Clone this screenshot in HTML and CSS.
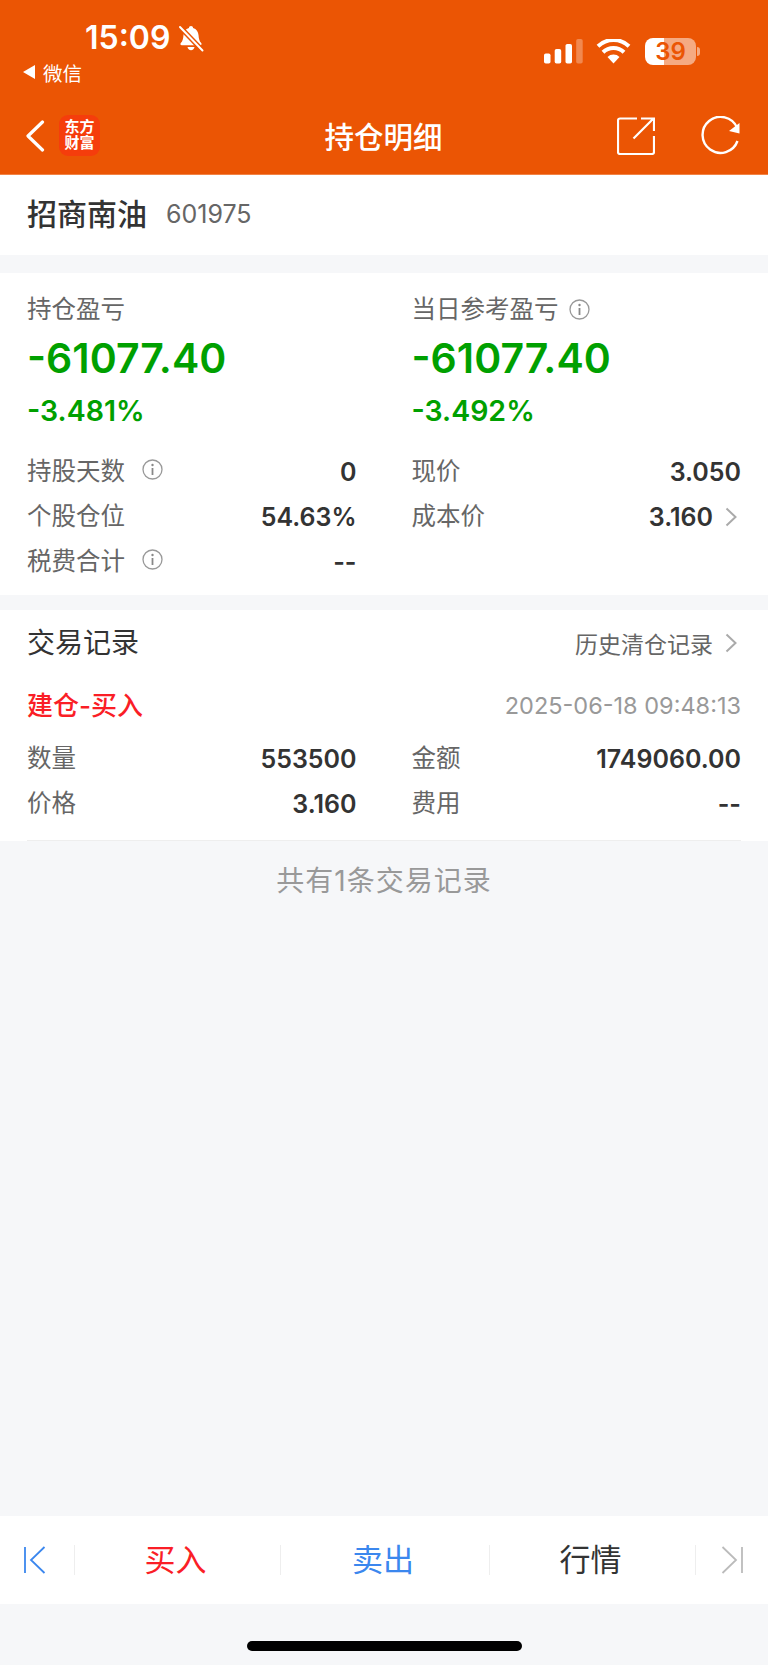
FILE: index.html
```html
<!DOCTYPE html>
<html lang="zh-CN">
<head>
  <meta charset="UTF-8">
  <title>持仓明细</title>
  <link rel="stylesheet" href="styles.css">
</head>
<body>

  <header class="header">
    <div class="status">
      <div class="status-left">
        <div class="clock">
          <span class="time">15:09</span>
          <svg class="bell" width="26" height="27" viewBox="0 0 26 27">
            <path d="M13 1c-1.300 0-2 .9-2.100 2C7.400 4 5.800 6.800 5.500 10c-.3 3.400-.7 6-2.700 8-.8.900-.3 2.200 1 2.200h18.400c1.300 0 1.800-1.300 1-2.200-2-2-2.400-4.600-2.700-8-.3-3.200-1.900-6-5.400-7C15 1.900 14.300 1 13 1z" fill="#fff"/>
            <path d="M9.500 22h7c-.3 2-1.700 3.200-3.500 3.200S9.800 24 9.500 22z" fill="#fff"/>
            <path d="M1.500 1.500l23 24" stroke="#eb5504" stroke-width="5"/>
            <path d="M2 2l22.500 23.500" stroke="#fff" stroke-width="2" stroke-linecap="round"/>
          </svg>
        </div>
        <div class="from">
          <svg width="12" height="14" viewBox="0 0 12 14"><polygon points="0,7 12,0 12,14" fill="#fff"/></svg>
          <span>微信</span>
        </div>
      </div>
      <div class="status-right">
        <svg width="40" height="25" viewBox="0 0 40 25">
          <rect x="0" y="14.500" width="6.500" height="10" rx="1.800" fill="#fff"/>
          <rect x="10.700" y="10" width="6.500" height="14.500" rx="1.800" fill="#fff"/>
          <rect x="21.500" y="5" width="6.500" height="19.500" rx="1.800" fill="#fff"/>
          <rect x="32.200" y="0" width="6.500" height="24.500" rx="1.800" fill="#fff" opacity=".3"/>
        </svg>
        <svg width="35" height="25" viewBox="0 0 35 25">
          <path d="M17.500 24.500L11.500 18a8.600 8.600 0 0 1 12 0z" fill="#fff"/>
          <path d="M7 13.200a15 15 0 0 1 21 0" fill="none" stroke="#fff" stroke-width="4"/>
          <path d="M2 7.200a22.500 22.500 0 0 1 31 0" fill="none" stroke="#fff" stroke-width="4"/>
        </svg>
        <div class="battery">
          <div class="battery-body">39</div>
          <div class="battery-tip"></div>
        </div>
      </div>
    </div>

    <nav class="nav">
      <div class="nav-left">
        <svg width="20" height="32" viewBox="0 0 20 32"><path d="M17.500 2L3 16l14.500 14" fill="none" stroke="#fff" stroke-width="3.200" stroke-linecap="round" stroke-linejoin="round"/></svg>
        <div class="logo">东方<br>财富</div>
      </div>
      <div class="nav-title">持仓明细</div>
      <div class="nav-right">
        <svg width="38" height="38" viewBox="0 0 38 38">
          <path d="M20 1.500H3a2 2 0 0 0-2 2V35a2 2 0 0 0 2 2h32a2 2 0 0 0 2-2V19" fill="none" stroke="#fff" stroke-width="2.200"/>
          <path d="M16.500 21.500L36 2M24 1.500h13V14" fill="none" stroke="#fff" stroke-width="2.200"/>
        </svg>
        <svg width="39" height="39" viewBox="0 0 39 39">
          <path d="M36 11.500A18 18 0 1 0 36.500 25" fill="none" stroke="#fff" stroke-width="2.400"/>
          <polygon points="38.500,7 38.500,17.500 28,15" fill="#fff"/>
        </svg>
      </div>
    </nav>
  </header>

  <main class="main">
    <section class="stock">
      <span class="stock-name">招商南油</span>
      <span class="stock-code">601975</span>
    </section>

    <section class="summary">
      <div class="totals">
        <div>
          <div class="total-label">持仓盈亏</div>
          <div class="total-value">-61077.40</div>
          <div class="total-pct">-3.481%</div>
        </div>
        <div>
          <div class="total-label">当日参考盈亏
            <svg class="info info-near" width="21" height="21" viewBox="0 0 21 21"><circle cx="10.500" cy="10.500" r="9.500" fill="none" stroke="#999" stroke-width="1.300"/><path d="M10.500 9v7" stroke="#888" stroke-width="1.800"/><circle cx="10.500" cy="6" r="1.200" fill="#888"/></svg>
          </div>
          <div class="total-value">-61077.40</div>
          <div class="total-pct">-3.492%</div>
        </div>
      </div>
      <div class="rows">
        <div class="row">
          <span class="row-label">持股天数
            <svg class="info" width="21" height="21" viewBox="0 0 21 21"><circle cx="10.500" cy="10.500" r="9.500" fill="none" stroke="#999" stroke-width="1.300"/><path d="M10.500 9v7" stroke="#888" stroke-width="1.800"/><circle cx="10.500" cy="6" r="1.200" fill="#888"/></svg>
          </span>
          <span class="row-value">0</span>
        </div>
        <div class="row">
          <span class="row-label">现价</span>
          <span class="row-value">3.050</span>
        </div>
        <div class="row">
          <span class="row-label">个股仓位</span>
          <span class="row-value">54.63%</span>
        </div>
        <div class="row">
          <span class="row-label">成本价</span>
          <span class="row-value">3.160
            <svg class="chevron" width="12" height="20" viewBox="0 0 12 20"><path d="M1.500 1.500L10.500 10l-9 8.500" fill="none" stroke="#aaa" stroke-width="2"/></svg>
          </span>
        </div>
        <div class="row">
          <span class="row-label">税费合计
            <svg class="info" width="21" height="21" viewBox="0 0 21 21"><circle cx="10.500" cy="10.500" r="9.500" fill="none" stroke="#999" stroke-width="1.300"/><path d="M10.500 9v7" stroke="#888" stroke-width="1.800"/><circle cx="10.500" cy="6" r="1.200" fill="#888"/></svg>
          </span>
          <span class="row-value">--</span>
        </div>
      </div>
    </section>

    <section class="trades">
      <div class="trades-head">
        <span class="trades-title">交易记录</span>
        <span class="trades-link">历史清仓记录
          <svg class="chevron" width="12" height="20" viewBox="0 0 12 20"><path d="M1.500 1.500L10.500 10l-9 8.500" fill="none" stroke="#aaa" stroke-width="2"/></svg>
        </span>
      </div>
      <div class="trade">
        <div class="trade-top">
          <span class="trade-type">建仓-买入</span>
          <span class="trade-date">2025-06-18 09:48:13</span>
        </div>
        <div class="rows">
          <div class="row">
            <span class="row-label">数量</span>
            <span class="row-value">553500</span>
          </div>
          <div class="row">
            <span class="row-label">金额</span>
            <span class="row-value">1749060.00</span>
          </div>
          <div class="row">
            <span class="row-label">价格</span>
            <span class="row-value">3.160</span>
          </div>
          <div class="row">
            <span class="row-label">费用</span>
            <span class="row-value">--</span>
          </div>
        </div>
      </div>
      <div class="trade-line"></div>
    </section>

    <div class="count">共有1条交易记录</div>
  </main>

  <div class="toolbar">
    <div class="tool tool-end">
      <svg width="22" height="28" viewBox="0 0 22 28"><path d="M1 1v26" stroke="#3b87ee" stroke-width="1.800"/><path d="M20.500 1L7 14l13.500 13" fill="none" stroke="#3b87ee" stroke-width="1.800"/></svg>
    </div>
    <div class="tool tool-buy">买入</div>
    <div class="tool tool-sell">卖出</div>
    <div class="tool tool-quote">行情</div>
    <div class="tool tool-end">
      <svg width="22" height="28" viewBox="0 0 22 28"><path d="M21 1v26" stroke="#bbb" stroke-width="1.800"/><path d="M1.500 1L15 14 1.500 27" fill="none" stroke="#bbb" stroke-width="1.800"/></svg>
    </div>
  </div>

  <div class="home">
    <div class="home-bar"></div>
  </div>

</body>
</html>
```

FILE: styles.css
```css
* {
  box-sizing: border-box;
}

body {
  margin: 0;
  height: 100vh;
  display: flex;
  flex-direction: column;
  font-family: Inter, "Noto Sans CJK SC", sans-serif;
  background: #f6f7f9;
  color: #333;
}

/* top bar */
.header {
  background: #eb5504;
  color: #fff;
  height: 175px;
  border-bottom: 1px solid #f28345;
  flex-shrink: 0;
}

.status {
  height: 99px;
  display: flex;
  justify-content: space-between;
}

.status-left {
  padding: 19px 0 0 23px;
}

.clock {
  display: flex;
  align-items: center;
  gap: 8px;
  margin-left: 62px;
  height: 38px;
}

.time {
  font-size: 32px;
  font-weight: 600;
  line-height: 38px;
}

.from {
  display: flex;
  align-items: center;
  gap: 8px;
  margin-top: 2px;
  height: 26px;
  font-size: 19.500px;
}

.status-right {
  display: flex;
  align-items: flex-start;
  gap: 12px;
  padding: 39px 68px 0 0;
}

.battery {
  display: flex;
  align-items: center;
  gap: 1px;
  margin: -1px 0 0 2px;
}

.battery-body {
  width: 51px;
  height: 27px;
  border-radius: 8px;
  background: linear-gradient(to right, #fff 0, #fff 19px, rgba(255,255,255,0.5) 19px);
  color: #eb5504;
  font-size: 24px;
  font-weight: 600;
  line-height: 27px;
  text-align: center;
}

.battery-tip {
  width: 3px;
  height: 9px;
  background: rgba(255,255,255,0.5);
  border-radius: 0 3px 3px 0;
}

.nav {
  height: 75px;
  display: grid;
  grid-template-columns: 1fr auto 1fr;
  align-items: center;
  padding: 0 28px 2px 25px;
}

.nav-left {
  display: flex;
  align-items: center;
  gap: 14px;
}

.logo {
  width: 41px;
  height: 41px;
  border-radius: 9px;
  background: #f53d0c;
  font-size: 15px;
  font-weight: 700;
  line-height: 16px;
  text-align: center;
  padding-top: 4px;
}

.nav-title {
  font-size: 29.500px;
  font-weight: 500;
  margin-left: 2px;
  padding-bottom: 2px;
}

.nav-right {
  display: flex;
  justify-content: flex-end;
  align-items: center;
  gap: 46px;
}

.main {
  flex: 1;
}

/* stock name */
.stock {
  height: 80px;
  background: #fff;
  padding: 0 27px;
  display: flex;
  align-items: center;
  gap: 19px;
}

.stock-name {
  font-size: 30px;
  font-weight: 500;
  padding-bottom: 6px;
}

.stock-code {
  font-size: 25px;
  color: #666;
  padding-bottom: 2px;
}

/* position summary */
.summary {
  margin-top: 18px;
  padding: 19px 0 11px;
  background: #fff;
}

.totals {
  display: grid;
  grid-template-columns: 1fr 1fr;
  gap: 55px;
  padding: 0 27px;
  margin-bottom: 18px;
}

.total-label {
  display: flex;
  align-items: center;
  font-size: 24.500px;
  line-height: 34px;
  color: #666;
}

.total-value {
  margin: 7px 0 0 0;
  font-size: 41px;
  font-weight: 600;
  line-height: 50px;
  color: #00a000;
}

.total-pct {
  margin-top: 8px;
  font-size: 28.500px;
  font-weight: 600;
  line-height: 40px;
  color: #00a000;
}

.rows {
  display: grid;
  grid-template-columns: 1fr 1fr;
  column-gap: 55px;
  padding: 0 27px;
}

.row {
  height: 45px;
  display: flex;
  align-items: center;
  justify-content: space-between;
}

.row-label {
  display: flex;
  align-items: center;
  font-size: 24.500px;
  color: #666;
  padding-bottom: 4px;
}

.row-value {
  display: flex;
  align-items: center;
  font-size: 25px;
  font-weight: 600;
  color: #333;
}

.info {
  margin-left: 17px;
}

.info-near {
  margin-left: 10px;
}

.chevron {
  margin: 0 4px 0 12px;
}

/* trade records */
.trades {
  margin-top: 15px;
  background: #fff;
}

.trades-head {
  height: 66px;
  padding: 0 27px;
  display: flex;
  align-items: center;
  justify-content: space-between;
}

.trades-title {
  font-size: 28px;
  padding-bottom: 4px;
}

.trades-link {
  display: flex;
  align-items: center;
  font-size: 23px;
  color: #666;
}

.trade {
  padding-bottom: 14px;
}

.trade-line {
  height: 1px;
  margin: 0 27px;
  background: #eee;
}

.trade-top {
  height: 60px;
  padding: 0 27px;
  display: flex;
  align-items: center;
  justify-content: space-between;
}

.trade-type {
  font-size: 26px;
  font-weight: 500;
  color: #fa1e26;
  padding-bottom: 6px;
}

.trade-date {
  font-size: 23.500px;
  color: #999;
  padding-bottom: 2px;
}

.count {
  height: 80px;
  line-height: 80px;
  text-align: center;
  font-size: 28px;
  letter-spacing: 1px;
  color: #999;
}

/* bottom buttons */
.toolbar {
  height: 88px;
  background: #fff;
  display: grid;
  grid-template-columns: 74px 206px 209px 206px 1fr;
  align-items: center;
  flex-shrink: 0;
}

.tool {
  height: 30px;
  display: flex;
  align-items: center;
  justify-content: center;
  font-size: 31px;
  border-left: 1px solid #eee;
  padding: 0 4px 6px 0;
}

.tool:first-child {
  border-left: none;
}

.tool-end {
  padding: 0;
}

.tool:first-child svg {
  margin-right: 4px;
}

.tool-buy {
  color: #fa1e26;
}

.tool-sell {
  color: #3b87ee;
}

.tool-quote {
  color: #333;
}

.home {
  height: 61px;
  padding-top: 37px;
  flex-shrink: 0;
}

.home-bar {
  width: 275px;
  height: 10px;
  margin: 0 auto;
  border-radius: 5px;
  background: #000;
}
```
